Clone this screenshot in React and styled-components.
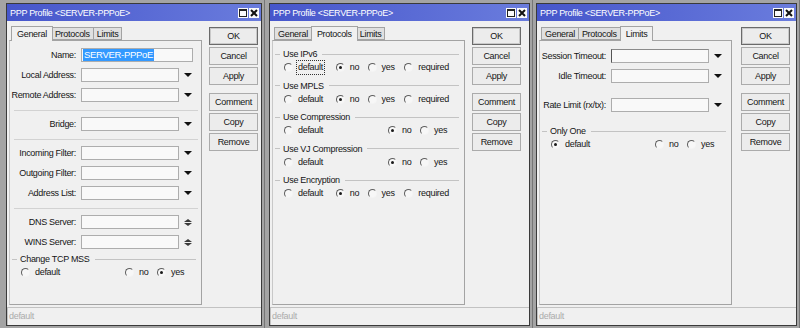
import React from "react";
import styled, { createGlobalStyle } from "styled-components";

const GlobalStyle = createGlobalStyle`
    html, body {
        margin: 0;
        padding: 0;
        background: #9a9a9a;
    }
    body {
        font-family: "Liberation Sans", Arial, sans-serif;
        font-size: 9px;
        letter-spacing: -0.3px;
        color: #151515;
    }
`;

const Desktop = styled.div`
    display: flex;
    width: 800px;
    height: 328px;
    overflow: hidden;
`;

// outer grey frame of a winbox window
const Window = styled.div`
    width: ${(p) => p.$w}px;
    height: 328px;
    box-sizing: border-box;
    padding: 3px 2px 2px ${(p) => p.$pl}px;
    background: #a4a4a4;
    border-right: 1px solid #767676;
    display: flex;
`;

const Frame = styled.div`
    flex: 1;
    display: flex;
    flex-direction: column;
    border: 1px solid #3a3a3a;
    background: #f0f0f0;
`;

const TitleBar = styled.div`
    height: 17px;
    display: flex;
    align-items: center;
    justify-content: space-between;
    padding: 0 2px 0 3px;
    background: linear-gradient(to right, #4656cb, #6a7cdd);
    color: #fff;
`;

const TitleButtons = styled.div`
    display: flex;
    gap: 1px;
`;

const TitleButton = styled.div`
    width: 10px;
    height: 10px;
    background: #fbfbfb;
    display: flex;
    align-items: center;
    justify-content: center;
`;

const MaxBox = styled.div`
    width: 6px;
    height: 5px;
    border: 1px solid #222;
    border-top-width: 2px;
`;

const Client = styled.div`
    flex: 1;
    display: flex;
    flex-direction: column;
`;

const Main = styled.div`
    flex: 1;
    display: flex;
    padding: 3px 0 0 2px;
`;

const TabColumn = styled.div`
    width: 193px;
    display: flex;
    flex-direction: column;
`;

const TabRow = styled.div`
    height: 16px;
    display: flex;
    align-items: flex-end;
    padding-left: 2px;
    position: relative;
    z-index: 1;
`;

const Tab = styled.div`
    height: ${(p) => (p.$active ? 15 : 13)}px;
    line-height: ${(p) => (p.$active ? 14 : 12)}px;
    box-sizing: border-box;
    padding: 0 ${(p) => (p.$active ? 5 : 3)}px;
    margin: 0 ${(p) => (p.$active ? -1 : 0)}px
        ${(p) => (p.$active ? -1 : 0)}px 0;
    border: 1px solid #a3a3a3;
    border-bottom: ${(p) => (p.$active ? "none" : "1px solid #a3a3a3")};
    background: ${(p) => (p.$active ? "#f0f0f0" : "#e0e0e0")};
    position: relative;
    z-index: ${(p) => (p.$active ? 2 : 1)};
    & + & {
        margin-left: -1px;
    }
`;

const Panel = styled.div`
    flex: 1;
    display: flex;
    flex-direction: column;
    border: 1px solid #a3a3a3;
    border-left-color: #c8c8c8;
    padding-top: 7px;
`;

const ButtonColumn = styled.div`
    display: flex;
    flex-direction: column;
    gap: 2px;
    padding: 3px 0 0 ${(p) => p.$gap}px;
`;

const Button = styled.div`
    width: 49px;
    height: 18px;
    box-sizing: border-box;
    border: 1px solid ${(p) => (p.$default ? "#6a6a6a" : "#ababab")};
    box-shadow: ${(p) => (p.$default ? "inset 0 0 0 1px #c9c9c9" : "none")};
    background: #ececec;
    margin-top: ${(p) => (p.$spaced ? 6 : 0)}px;
    display: flex;
    align-items: center;
    justify-content: center;
`;

const StatusBar = styled.div`
    height: 18px;
    box-sizing: border-box;
    margin-top: 2px;
    border-top: 1px solid #c2c2c2;
    border-left: 1px solid #c2c2c2;
    color: #ababab;
    line-height: 17px;
    padding-left: 1px;
`;

const FormRow = styled.div`
    display: flex;
    align-items: center;
    height: 14px;
    margin-top: ${(p) => p.$mt || 0}px;
    margin-bottom: 6px;
`;

const Label = styled.div`
    width: 71px;
    box-sizing: border-box;
    padding-right: 5px;
    text-align: right;
    white-space: nowrap;
`;

const Field = styled.div`
    width: ${(p) => p.$w || 98}px;
    height: 14px;
    box-sizing: border-box;
    background: #f9f9f9;
    border: 1px solid #adadad;
    border-left-color: ${(p) => (p.$focus ? "#555" : "#adadad")};
    border-top-color: ${(p) => (p.$focus ? "#8a8a8a" : "#adadad")};
    display: flex;
    align-items: center;
    padding-left: 1px;
`;

const Selected = styled.span`
    background: #3399ff;
    color: #fff;
    line-height: 12px;
    padding: 0 1px;
    font-size: 9.5px;
`;

const ArrowBox = styled.div`
    width: 18px;
    display: flex;
    flex-direction: column;
    align-items: center;
    gap: 1px;
`;

const Triangle = styled.div`
    width: 0;
    height: 0;
    border-left: 4px solid transparent;
    border-right: 4px solid transparent;
    ${(p) => (p.$up ? "border-bottom" : "border-top")}: ${(p) =>
        p.$small ? 3 : 4}px solid ${(p) => (p.$small ? "#3a3a3a" : "#111")};
`;

const Separator = styled.div`
    height: 1px;
    background: #d2d2d2;
    margin: 2px 3px 6px 4px;
`;

const Group = styled.div`
    margin-top: ${(p) => p.$mt || 0}px;
    margin-bottom: 5.5px;
`;

const Legend = styled.div`
    height: 12px;
    display: flex;
    align-items: center;
    gap: 3px;
    margin: 0 5px 0 2px;
    &::before,
    &::after {
        content: "";
        height: 1px;
        background: #c3c3c3;
    }
    &::before {
        width: 5px;
    }
    &::after {
        flex: 1;
        margin-left: 2px;
    }
`;

const RadioRow = styled.div`
    display: flex;
    align-items: center;
    height: 13px;
    margin-top: 1px;
    padding-left: 11px;
`;

const RadioItem = styled.div`
    width: ${(p) => p.$w}px;
    display: flex;
    align-items: center;
    gap: 5px;
`;

const RadioDot = styled.span`
    width: 9px;
    height: 9px;
    box-sizing: border-box;
    border-radius: 50%;
    border: 1px solid;
    border-color: #5e5e5e #f4f4f4 #f4f4f4 #5e5e5e;
    background: #f7f7f7;
    position: relative;
    &::after {
        content: "";
        display: ${(p) => (p.$checked ? "block" : "none")};
        position: absolute;
        left: 2px;
        top: 2px;
        width: 3px;
        height: 3px;
        border-radius: 50%;
        background: #1a1a1a;
    }
`;

const RadioText = styled.span`
    outline: ${(p) => (p.$focus ? "1px dotted #333" : "none")};
    outline-offset: 1px;
    line-height: 11px;
`;

const CloseIcon = () => (
    <svg width="8" height="8" viewBox="0 0 8 8">
        <path d="M1 1 L7 7 M7 1 L1 7" stroke="#111" strokeWidth="2" />
    </svg>
);

const Input = ({ label, w, arrow = "down", focus, mt, children }) => (
    <FormRow $mt={mt}>
        <Label>{label}</Label>
        <Field $w={w} $focus={focus}>
            {children}
        </Field>
        {arrow === "down" && (
            <ArrowBox>
                <Triangle />
            </ArrowBox>
        )}
        {arrow === "updown" && (
            <ArrowBox>
                <Triangle $up $small />
                <Triangle $small />
            </ArrowBox>
        )}
    </FormRow>
);

// widths of each option cell, the last one just takes its text
const FOUR = [52, 32, 37, 60];
const THREE = [104, 32, 40];

const RadioGroup = ({ title, options, checked, widths, focus, mt }) => (
    <Group $mt={mt}>
        <Legend>{title}</Legend>
        <RadioRow>
            {options.map((o, i) => (
                <RadioItem key={o} $w={widths[i]}>
                    <RadioDot $checked={o === checked} />
                    <RadioText $focus={focus && i === 0}>{o}</RadioText>
                </RadioItem>
            ))}
        </RadioRow>
    </Group>
);

const GeneralTab = () => (
    <>
        <Input label="Name:" w={112} arrow="none">
            <Selected>SERVER-PPPoE</Selected>
        </Input>
        <Input label="Local Address:" />
        <Input label="Remote Address:" />
        <Separator />
        <Input label="Bridge:" />
        <Separator />
        <Input label="Incoming Filter:" />
        <Input label="Outgoing Filter:" />
        <Input label="Address List:" />
        <Separator />
        <Input label="DNS Server:" arrow="updown" />
        <Input label="WINS Server:" arrow="updown" />
        <RadioGroup
            mt={-2}
            title="Change TCP MSS"
            options={["default", "no", "yes"]}
            checked="yes"
            widths={THREE}
        />
    </>
);

const ProtocolsTab = () => (
    <>
        <RadioGroup
            title="Use IPv6"
            options={["default", "no", "yes", "required"]}
            checked="no"
            widths={FOUR}
            focus
        />
        <RadioGroup
            title="Use MPLS"
            options={["default", "no", "yes", "required"]}
            checked="no"
            widths={FOUR}
        />
        <RadioGroup
            title="Use Compression"
            options={["default", "no", "yes"]}
            checked="no"
            widths={THREE}
        />
        <RadioGroup
            title="Use VJ Compression"
            options={["default", "no", "yes"]}
            checked="no"
            widths={THREE}
        />
        <RadioGroup
            title="Use Encryption"
            options={["default", "no", "yes", "required"]}
            checked="no"
            widths={FOUR}
        />
    </>
);

const LimitsTab = () => (
    <>
        <Input label="Session Timeout:" focus mt={1} />
        <Input label="Idle Timeout:" />
        <Input label="Rate Limit (rx/tx):" mt={9} />
        <RadioGroup
            mt={7}
            title="Only One"
            options={["default", "no", "yes"]}
            checked="default"
            widths={THREE}
        />
    </>
);

const TABS = ["General", "Protocols", "Limits"];
const BUTTONS = ["OK", "Cancel", "Apply", "Comment", "Copy", "Remove"];

const PPPWindow = ({ w, pl, gap, active, children }) => (
    <Window $w={w} $pl={pl}>
        <Frame>
            <TitleBar>
                <span>PPP Profile &lt;SERVER-PPPoE&gt;</span>
                <TitleButtons>
                    <TitleButton>
                        <MaxBox />
                    </TitleButton>
                    <TitleButton>
                        <CloseIcon />
                    </TitleButton>
                </TitleButtons>
            </TitleBar>
            <Client>
                <Main>
                    <TabColumn>
                        <TabRow>
                            {TABS.map((t) => (
                                <Tab key={t} $active={t === active}>
                                    {t}
                                </Tab>
                            ))}
                        </TabRow>
                        <Panel>{children}</Panel>
                    </TabColumn>
                    <ButtonColumn $gap={gap}>
                        {BUTTONS.map((b) => (
                            <Button
                                key={b}
                                $default={b === "OK"}
                                $spaced={b === "Comment"}
                            >
                                {b}
                            </Button>
                        ))}
                    </ButtonColumn>
                </Main>
                <StatusBar>default</StatusBar>
            </Client>
        </Frame>
    </Window>
);

const App = () => (
    <>
        <GlobalStyle />
        <Desktop>
            <PPPWindow w={265} pl={6} gap={7} active="General">
                <GeneralTab />
            </PPPWindow>
            <PPPWindow w={268} pl={4} gap={7} active="Protocols">
                <ProtocolsTab />
            </PPPWindow>
            <PPPWindow w={267} pl={3} gap={9} active="Limits">
                <LimitsTab />
            </PPPWindow>
        </Desktop>
    </>
);

export default App;
